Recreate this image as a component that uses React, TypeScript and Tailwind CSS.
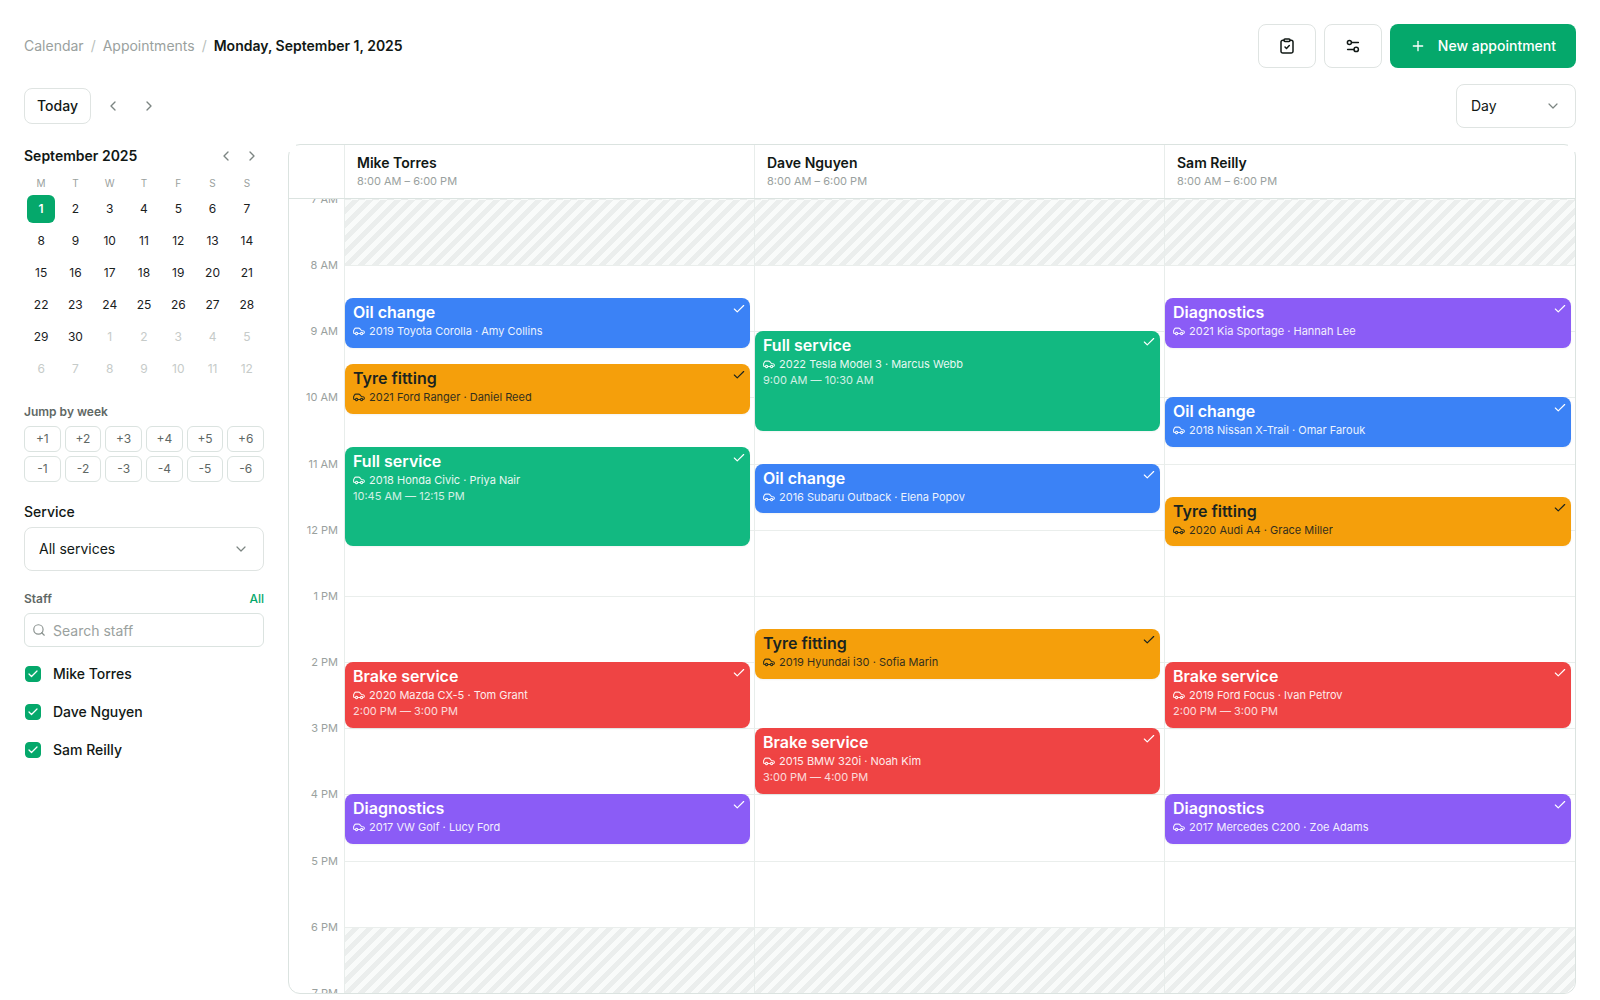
import { useState } from "react";
import { Check, ChevronDown, ChevronLeft, ChevronRight, Plus, Search } from "lucide-react";

type Service = "oil" | "tyre" | "full" | "brake" | "diag";

type Appointment = {
  service: Service;
  car: string;
  customer: string;
  start: number;
  end: number;
};

const SERVICES: Record<Service, { label: string; className: string }> = {
  oil: { label: "Oil change", className: "bg-[#3b82f6] text-white" },
  tyre: { label: "Tyre fitting", className: "bg-[#f59f0b] text-[#1a2420]" },
  full: { label: "Full service", className: "bg-[#12b981] text-white" },
  brake: { label: "Brake service", className: "bg-[#ef4444] text-white" },
  diag: { label: "Diagnostics", className: "bg-[#8b5cf6] text-white" },
};

const STAFF: { name: string; appointments: Appointment[] }[] = [
  {
    name: "Mike Torres",
    appointments: [
      { service: "oil", car: "2019 Toyota Corolla", customer: "Amy Collins", start: 8.5, end: 9.25 },
      { service: "tyre", car: "2021 Ford Ranger", customer: "Daniel Reed", start: 9.5, end: 10.25 },
      { service: "full", car: "2018 Honda Civic", customer: "Priya Nair", start: 10.75, end: 12.25 },
      { service: "brake", car: "2020 Mazda CX-5", customer: "Tom Grant", start: 14, end: 15 },
      { service: "diag", car: "2017 VW Golf", customer: "Lucy Ford", start: 16, end: 16.75 },
    ],
  },
  {
    name: "Dave Nguyen",
    appointments: [
      { service: "full", car: "2022 Tesla Model 3", customer: "Marcus Webb", start: 9, end: 10.5 },
      { service: "oil", car: "2016 Subaru Outback", customer: "Elena Popov", start: 11, end: 11.75 },
      { service: "tyre", car: "2019 Hyundai i30", customer: "Sofia Marin", start: 13.5, end: 14.25 },
      { service: "brake", car: "2015 BMW 320i", customer: "Noah Kim", start: 15, end: 16 },
    ],
  },
  {
    name: "Sam Reilly",
    appointments: [
      { service: "diag", car: "2021 Kia Sportage", customer: "Hannah Lee", start: 8.5, end: 9.25 },
      { service: "oil", car: "2018 Nissan X-Trail", customer: "Omar Farouk", start: 10, end: 10.75 },
      { service: "tyre", car: "2020 Audi A4", customer: "Grace Miller", start: 11.5, end: 12.25 },
      { service: "brake", car: "2019 Ford Focus", customer: "Ivan Petrov", start: 14, end: 15 },
      { service: "diag", car: "2017 Mercedes C200", customer: "Zoe Adams", start: 16, end: 16.75 },
    ],
  },
];

const FIRST_HOUR = 7;
const HOURS = Array.from({ length: 12 }, (_, i) => FIRST_HOUR + i);
const WEEKDAYS = ["M", "T", "W", "T", "F", "S", "S"];
const DAYS = Array.from({ length: 42 }, (_, i) => (i < 30 ? i + 1 : i - 29));
const JUMPS = ["+1", "+2", "+3", "+4", "+5", "+6", "-1", "-2", "-3", "-4", "-5", "-6"];

function hourLabel(hour: number) {
  return `${hour > 12 ? hour - 12 : hour} ${hour < 12 ? "AM" : "PM"}`;
}

function timeLabel(time: number) {
  const hour = Math.floor(time);
  const minutes = String(Math.round((time - hour) * 60)).padStart(2, "0");
  return `${hour > 12 ? hour - 12 : hour}:${minutes} ${hour < 12 ? "AM" : "PM"}`;
}

// the day grid has four rows per hour
function slot(time: number) {
  return (time - FIRST_HOUR) * 4 + 1;
}

function CarIcon() {
  return (
    <svg className="size-3 shrink-0" viewBox="0 0 24 24" fill="none" stroke="currentColor" strokeWidth="2.2" strokeLinecap="round" strokeLinejoin="round" aria-hidden="true">
      <path d="M4.500 17H3.200A2 2 0 0 1 1.200 15v-3.500L3 8c.6-1.200 1.400-1.700 2.700-1.700h5.600c1.200 0 2 .4 2.800 1.300L16.800 11l3.400.6c1.700.3 2.600 1.300 2.600 2.900 0 1.700-.8 2.500-2.600 2.500M9.800 17h4.600" />
      <circle cx="7.200" cy="17" r="2.300" />
      <circle cx="17.200" cy="17" r="2.300" />
    </svg>
  );
}

function ClipboardIcon() {
  return (
    <svg className="size-4" viewBox="0 0 16 16" fill="none" stroke="currentColor" strokeWidth="1.5" strokeLinecap="round" strokeLinejoin="round" aria-hidden="true">
      <path d="M5 2.200H3.800A1.800 1.800 0 0 0 2 4v9.200A1.800 1.800 0 0 0 3.800 15h8.400a1.800 1.800 0 0 0 1.800-1.800V4a1.800 1.800 0 0 0-1.800-1.800H11" />
      <rect x="5" y="0.900" width="6" height="2.600" rx="1" />
      <path d="m6 9 1.500 1.500L10.300 7.600" />
    </svg>
  );
}

function SlidersIcon() {
  return (
    <svg className="size-4" viewBox="0 0 16 16" fill="none" stroke="currentColor" strokeWidth="1.5" strokeLinecap="round" strokeLinejoin="round" aria-hidden="true">
      <circle cx="4.400" cy="4.600" r="2" />
      <path d="M6.800 4.600h6.600M2.600 11.400H8.800" />
      <circle cx="11.200" cy="11.400" r="2.200" />
    </svg>
  );
}

function AppointmentCard({ appointment }: { appointment: Appointment }) {
  const { service, car, customer, start, end } = appointment;
  return (
    <article
      className={`relative col-start-1 mr-1 overflow-hidden rounded-lg px-2 pt-1 shadow-xs ${SERVICES[service].className}`}
      style={{ gridRow: `${slot(start)} / ${slot(end)}` }}
    >
      <h3 className="text-base leading-[21px] font-semibold">{SERVICES[service].label}</h3>
      <p className="flex items-center gap-1 text-[11px] leading-4 opacity-90">
        <CarIcon />
        {car} · {customer}
      </p>
      {end - start >= 1 && (
        <p className="text-[11px] leading-4 opacity-80">
          {timeLabel(start)} — {timeLabel(end)}
        </p>
      )}
      <Check className="absolute top-1 right-1 size-3.5" strokeWidth={2} />
    </article>
  );
}

function MiniCalendar() {
  const [selected, setSelected] = useState(0);
  return (
    <section>
      <div className="flex h-6 items-center justify-between">
        <h2 className="text-sm font-semibold">September 2025</h2>
        <div className="flex gap-0.5 text-[#7c8582]">
          <button type="button" aria-label="Previous month" className="flex size-6 items-center justify-center">
            <ChevronLeft className="size-4" strokeWidth={2} />
          </button>
          <button type="button" aria-label="Next month" className="flex size-6 items-center justify-center">
            <ChevronRight className="size-4" strokeWidth={2} />
          </button>
        </div>
      </div>
      <div className="mt-[7px] grid grid-cols-7 text-center text-[10px] leading-4 text-[#9aa19e]">
        {WEEKDAYS.map((day, i) => (
          <span key={i}>{day}</span>
        ))}
      </div>
      <div className="mt-0.5 grid grid-cols-7">
        {DAYS.map((day, i) => (
          <div key={i} className="flex h-8 items-center justify-center">
            <button
              type="button"
              onClick={() => setSelected(i)}
              className={`size-7 rounded-md text-xs ${
                i === selected ? "bg-[#05a86b] font-semibold text-white" : i < 30 ? "text-[#1a211e]" : "text-[#c6cbc9]"
              }`}
            >
              {day}
            </button>
          </div>
        ))}
      </div>
    </section>
  );
}

export default function App() {
  return (
    <div className="flex h-screen flex-col bg-white px-6 pt-6 pb-1.5 font-['Inter',sans-serif] text-sm text-[#111815]">
      <header className="flex items-center justify-between">
        <nav aria-label="Breadcrumb" className="flex gap-[7px] text-[#9aa19e]">
          <a href="#calendar">Calendar</a>
          <span className="text-[#b9bfbc]">/</span>
          <a href="#appointments">Appointments</a>
          <span className="text-[#b9bfbc]">/</span>
          <span className="font-semibold text-[#111815]">Monday, September 1, 2025</span>
        </nav>
        <div className="flex gap-2">
          <button type="button" aria-label="Tasks" className="flex h-11 w-[58px] items-center justify-center rounded-lg border border-[#dfe4e2]">
            <ClipboardIcon />
          </button>
          <button type="button" aria-label="Settings" className="flex h-11 w-[58px] items-center justify-center rounded-lg border border-[#dfe4e2]">
            <SlidersIcon />
          </button>
          <button type="button" className="flex h-11 items-center gap-3 rounded-lg bg-[#05a86b] px-5 font-medium text-white">
            <Plus className="size-4" strokeWidth={2} />
            New appointment
          </button>
        </div>
      </header>

      <div className="mt-4 flex items-center justify-between">
        <div className="flex items-center text-[#7c8582]">
          <button type="button" className="mr-1 h-9 rounded-lg border border-[#dfe4e2] px-3 font-medium text-[#111815]">
            Today
          </button>
          <button type="button" aria-label="Previous day" className="flex size-9 items-center justify-center">
            <ChevronLeft className="size-4" strokeWidth={2} />
          </button>
          <button type="button" aria-label="Next day" className="flex size-9 items-center justify-center">
            <ChevronRight className="size-4" strokeWidth={2} />
          </button>
        </div>
        <div className="relative">
          <select aria-label="View" className="h-11 w-30 appearance-none rounded-lg border border-[#dfe4e2] px-3.5">
            <option>Day</option>
            <option>Week</option>
            <option>Month</option>
          </select>
          <ChevronDown className="pointer-events-none absolute top-3.5 right-[15px] size-4 text-[#7c8582]" strokeWidth={1.8} />
        </div>
      </div>

      <div className="mt-4 flex min-h-0 flex-1 gap-6">
        <aside className="w-60 shrink-0">
          <MiniCalendar />

          <section className="mt-[19px]">
            <h2 className="text-xs font-semibold text-[#5f6865]">Jump by week</h2>
            <div className="mt-1.5 grid grid-cols-6 gap-1">
              {JUMPS.map((jump) => (
                <button key={jump} type="button" className="h-[26px] rounded-md border border-[#dbe3e0] text-xs text-[#5f6865]">
                  {jump}
                </button>
              ))}
            </div>
          </section>

          <section className="mt-5">
            <label htmlFor="service" className="block leading-5 font-medium">
              Service
            </label>
            <div className="relative mt-[5px]">
              <select id="service" className="h-11 w-full appearance-none rounded-lg border border-[#dfe4e2] px-3.5">
                <option>All services</option>
                {Object.values(SERVICES).map(({ label }) => (
                  <option key={label}>{label}</option>
                ))}
              </select>
              <ChevronDown className="pointer-events-none absolute top-3.5 right-[15px] size-4 text-[#7c8582]" strokeWidth={1.8} />
            </div>
          </section>

          <section className="mt-5">
            <div className="flex justify-between text-xs">
              <h2 className="font-semibold text-[#5f6865]">Staff</h2>
              <button type="button" className="font-medium text-[#05a86b]">
                All
              </button>
            </div>
            <div className="relative mt-1.5">
              <Search className="absolute top-2.5 left-2 size-3.5 text-[#8a928f]" strokeWidth={2} />
              <input
                type="text"
                aria-label="Search staff"
                placeholder="Search staff"
                className="h-[34px] w-full rounded-md border border-[#dbe3e0] pr-3 pl-7 placeholder:text-[#9aa19e]"
              />
            </div>
            <div className="mt-2">
              {STAFF.map(({ name }) => (
                <label key={name} className="flex h-[38px] items-center gap-3 font-medium">
                  <span className="relative ml-px flex size-4">
                    <input type="checkbox" defaultChecked className="peer size-4 appearance-none rounded-sm border border-[#cfd6d3] checked:border-[#05a86b] checked:bg-[#05a86b]" />
                    <Check className="pointer-events-none absolute inset-0.5 hidden size-3 text-white peer-checked:block" strokeWidth={2.5} />
                  </span>
                  {name}
                </label>
              ))}
            </div>
          </section>
        </aside>

        <main className="relative flex min-w-0 flex-1 flex-col rounded-xl border border-[#dbe3e0]">
          {/* header is square, so it hides the frame's rounded top corners */}
          <span className="absolute -top-px -left-px size-2 bg-white" />
          <span className="absolute -top-px -right-px size-2 bg-white" />

          <div className="flex border-b border-[#dbe3e0]">
            <div className="w-14 shrink-0 border-r border-[#e8edeb]" />
            <div className="grid flex-1 grid-cols-3">
              {STAFF.map(({ name }) => (
                <div key={name} className="border-r border-[#e8edeb] px-3 pt-2 pb-[9px] last:border-r-0">
                  <h2 className="leading-5 font-semibold">{name}</h2>
                  <p className="text-[11px] leading-4 text-[#9aa19e]">8:00 AM – 6:00 PM</p>
                </div>
              ))}
            </div>
          </div>

          <div className="flex min-h-0 flex-1 overflow-hidden rounded-b-xl">
            <div className="grid w-14 shrink-0 grid-rows-12 border-r border-[#e8edeb] pr-1.5 text-right text-[11px] leading-4 text-[#9aa19e]">
              {HOURS.map((hour) => (
                <div key={hour} className="flex min-h-0 flex-col justify-between">
                  <span className="-mt-2">{hourLabel(hour)}</span>
                  {hour === 18 && <span className="-mb-2">{hourLabel(19)}</span>}
                </div>
              ))}
            </div>
            <div className="grid flex-1 grid-cols-3">
              {STAFF.map(({ name, appointments }) => (
                <div key={name} className="grid grid-rows-[repeat(48,minmax(0,1fr))] border-r border-[#e8edeb] last:border-r-0">
                  {HOURS.map((hour) => (
                    <div
                      key={hour}
                      className={`col-start-1 border-t ${hour === FIRST_HOUR ? "border-transparent" : "border-[#eaeeec]"} ${
                        hour < 8 || hour >= 18
                          ? "bg-[repeating-linear-gradient(135deg,#f9fbfa_0px,#f9fbfa_5px,#ebeeed_5px,#ebeeed_10px)]"
                          : ""
                      }`}
                      style={{ gridRow: `${slot(hour)} / span 4` }}
                    />
                  ))}
                  {appointments.map((appointment) => (
                    <AppointmentCard key={appointment.start} appointment={appointment} />
                  ))}
                </div>
              ))}
            </div>
          </div>
        </main>
      </div>
    </div>
  );
}
